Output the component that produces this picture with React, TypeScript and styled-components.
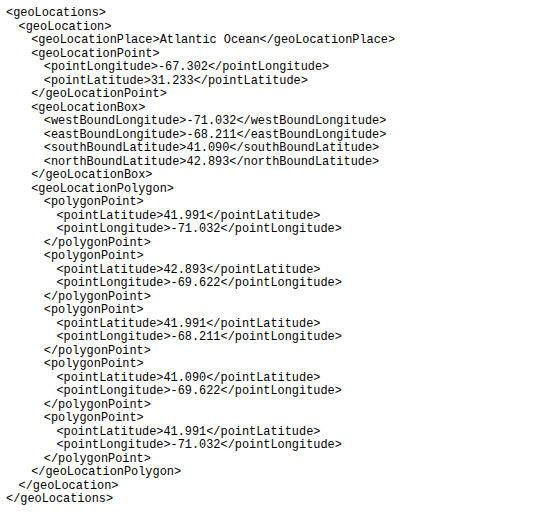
import React from "react";
import styled, { createGlobalStyle } from "styled-components";

const Global = createGlobalStyle`
  html, body { margin: 0; padding: 0; background: #ffffff; }
`;

const Code = styled.div`
  padding: 7px 6px;
  font-family: "Liberation Mono", "Courier New", monospace;
  font-size: 11.9px;
  line-height: 13.5px;
  color: #000000;
`;

const Line = styled.div<{ $indent: number }>`
  white-space: pre;
  padding-left: ${(p) => p.$indent * 12.6}px;
`;

const lines: [number, string][] = [
  [0, "<geoLocations>"],
  [1, "<geoLocation>"],
  [2, "<geoLocationPlace>Atlantic Ocean</geoLocationPlace>"],
  [2, "<geoLocationPoint>"],
  [3, "<pointLongitude>-67.302</pointLongitude>"],
  [3, "<pointLatitude>31.233</pointLatitude>"],
  [2, "</geoLocationPoint>"],
  [2, "<geoLocationBox>"],
  [3, "<westBoundLongitude>-71.032</westBoundLongitude>"],
  [3, "<eastBoundLongitude>-68.211</eastBoundLongitude>"],
  [3, "<southBoundLatitude>41.090</southBoundLatitude>"],
  [3, "<northBoundLatitude>42.893</northBoundLatitude>"],
  [2, "</geoLocationBox>"],
  [2, "<geoLocationPolygon>"],
];

const points: [string, string][] = [
  ["41.991", "-71.032"],
  ["42.893", "-69.622"],
  ["41.991", "-68.211"],
  ["41.090", "-69.622"],
  ["41.991", "-71.032"],
];

points.forEach(([lat, lon]) => {
  lines.push([3, "<polygonPoint>"]);
  lines.push([4, `<pointLatitude>${lat}</pointLatitude>`]);
  lines.push([4, `<pointLongitude>${lon}</pointLongitude>`]);
  lines.push([3, "</polygonPoint>"]);
});

lines.push([2, "</geoLocationPolygon>"]);
lines.push([1, "</geoLocation>"]);
lines.push([0, "</geoLocations>"]);

export default function App() {
  return (
    <>
      <Global />
      <Code>
        {lines.map(([indent, text], i) => (
          <Line key={i} $indent={indent}>
            {text}
          </Line>
        ))}
      </Code>
    </>
  );
}
